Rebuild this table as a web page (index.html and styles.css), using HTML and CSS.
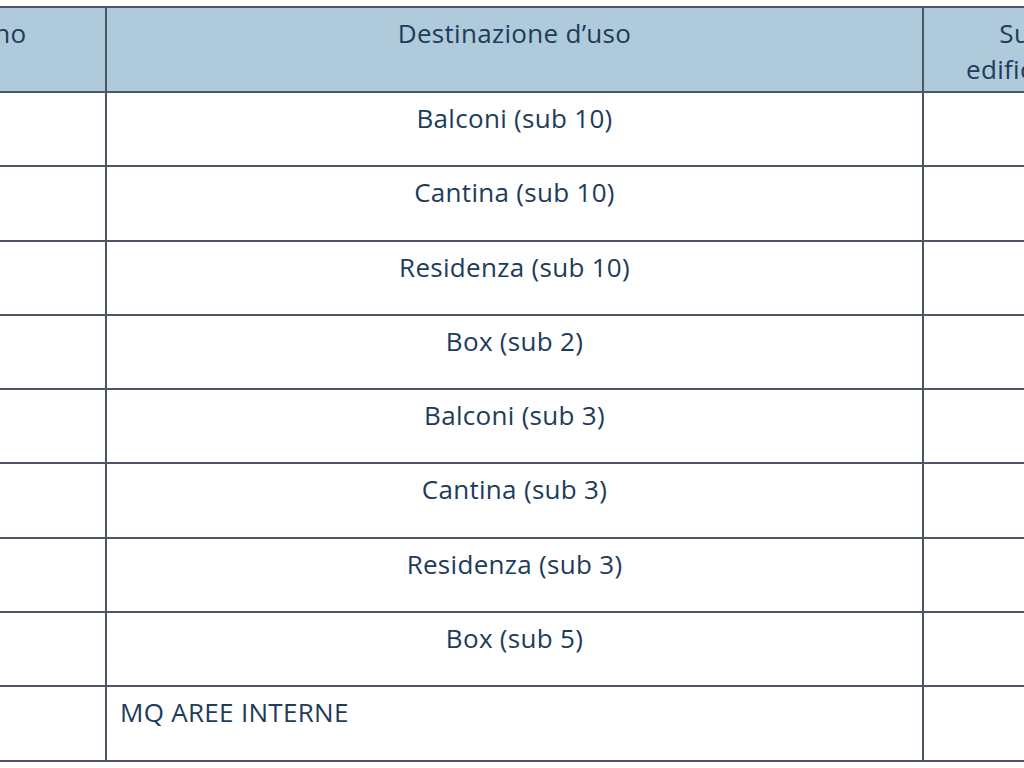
FILE: index.html
```html
<!DOCTYPE html>
<html lang="it">
<head>
<meta charset="utf-8">
<title>Destinazione d'uso</title>
<link rel="stylesheet" href="styles.css">
</head>
<body>
<div class="sheet">
  <div class="grid">
    <div class="cell head">Piano</div>
    <div class="cell head">Destinazione d’uso</div>
    <div class="cell head">Superficie<br>edificabile (mq)</div>

    <div class="cell"></div><div class="cell">Balconi (sub 10)</div><div class="cell"></div>
    <div class="cell"></div><div class="cell">Cantina (sub 10)</div><div class="cell"></div>
    <div class="cell"></div><div class="cell">Residenza (sub 10)</div><div class="cell"></div>
    <div class="cell"></div><div class="cell">Box (sub 2)</div><div class="cell"></div>
    <div class="cell"></div><div class="cell">Balconi (sub 3)</div><div class="cell"></div>
    <div class="cell"></div><div class="cell">Cantina (sub 3)</div><div class="cell"></div>
    <div class="cell"></div><div class="cell">Residenza (sub 3)</div><div class="cell"></div>
    <div class="cell"></div><div class="cell">Box (sub 5)</div><div class="cell"></div>
    <div class="cell"></div><div class="cell left">MQ AREE INTERNE</div><div class="cell"></div>
  </div>
</div>
</body>
</html>
```
FILE: styles.css
```css
html, body {
  margin: 0;
  padding: 0;
  background: #ffffff;
  overflow: hidden;
  width: 1024px;
  height: 768px;
}
.sheet {
  padding-top: 6px;
  width: 1024px;
  overflow: hidden;
}
.grid {
  display: grid;
  grid-template-columns: 227px 815px 274px;
  grid-template-rows: 83px repeat(9, 72.3px);
  gap: 2px;
  padding: 2px;
  margin-left: -124px;
  width: max-content;
  background: #4b5566;
  font-family: "Open Sans", Lato, sans-serif;
  font-size: 26px;
  letter-spacing: 0.3px;
  color: #213b5a;
}
.cell {
  background: #ffffff;
  text-align: center;
  line-height: 30px;
  padding-top: 10px;
  box-sizing: border-box;
}
.head {
  background: #aecadb;
  line-height: 36px;
  padding-top: 7px;
}
.left {
  text-align: left;
  padding-left: 13px;
}
```
